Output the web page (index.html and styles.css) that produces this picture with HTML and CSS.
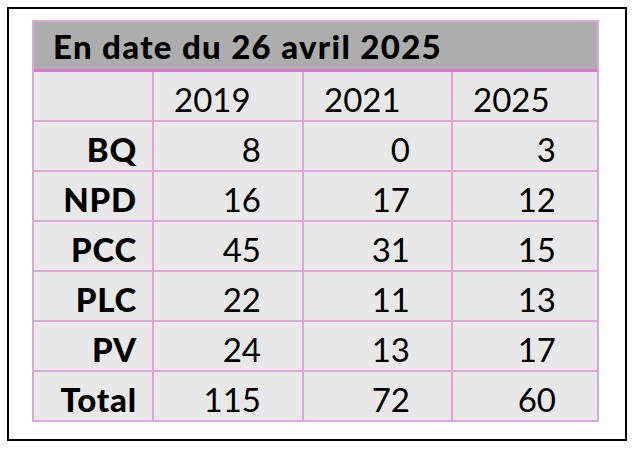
FILE: index.html
```html
<!DOCTYPE html>
<html lang="fr">
<head>
<meta charset="utf-8">
<title>En date du 26 avril 2025</title>
<link rel="stylesheet" href="styles.css">
</head>
<body>
<div class="frame">
  <div class="table">
    <div class="title">En date du 26 avril 2025</div>
    <div class="grid">
      <div class="cell label"></div>
      <div class="cell year">2019</div>
      <div class="cell year">2021</div>
      <div class="cell year">2025</div>

      <div class="cell label">BQ</div>
      <div class="cell num">8</div>
      <div class="cell num">0</div>
      <div class="cell num">3</div>

      <div class="cell label">NPD</div>
      <div class="cell num">16</div>
      <div class="cell num">17</div>
      <div class="cell num">12</div>

      <div class="cell label">PCC</div>
      <div class="cell num">45</div>
      <div class="cell num">31</div>
      <div class="cell num">15</div>

      <div class="cell label">PLC</div>
      <div class="cell num">22</div>
      <div class="cell num">11</div>
      <div class="cell num">13</div>

      <div class="cell label">PV</div>
      <div class="cell num">24</div>
      <div class="cell num">13</div>
      <div class="cell num">17</div>

      <div class="cell label">Total</div>
      <div class="cell num">115</div>
      <div class="cell num">72</div>
      <div class="cell num">60</div>
    </div>
  </div>
</div>
</body>
</html>
```
FILE: styles.css
```css
html, body {
  margin: 0;
  padding: 0;
  background: #ffffff;
}

body {
  font-family: Lato, "Open Sans", sans-serif;
  color: #000000;
}

.frame {
  box-sizing: border-box;
  margin: 7px 0 0 7px;
  width: 620px;
  height: 434px;
  border: 2px solid #000000;
  padding: 11px 0 0 23px;
}

.table {
  width: 567px;
  border: 2px solid #e0a3dc;
  box-sizing: border-box;
  background: #e0a3dc;
}

.title {
  height: 50px;
  background: #adadad;
  border-bottom: 3px solid #d67ad0;
  font-weight: 900;
  font-size: 33px;
  letter-spacing: 1.3px;
  line-height: 47px;
  padding-left: 19px;
  padding-top: 1px;
  box-sizing: border-box;
}

.grid {
  display: grid;
  grid-template-columns: 118px 148px 147px 144px;
  grid-auto-rows: 48px;
  gap: 2px;
  background: #e0a3dc;
}

.cell {
  background: #e8e8e8;
  display: flex;
  align-items: center;
  font-size: 33px;
  padding-top: 5px;
  box-sizing: border-box;
}

.label {
  justify-content: flex-end;
  font-weight: 900;
  letter-spacing: 0.8px;
  padding-right: 15px;
}

.year {
  justify-content: flex-start;
  padding-left: 20px;
}

.num {
  justify-content: flex-end;
  padding-right: 41px;
}
```
